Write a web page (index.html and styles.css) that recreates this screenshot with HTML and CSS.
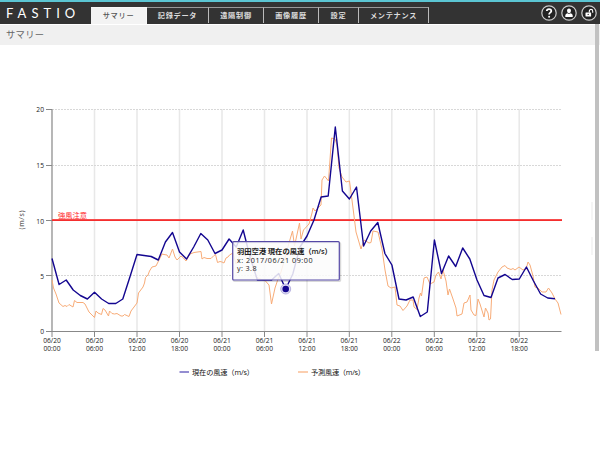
FILE: index.html
```
<!DOCTYPE html>
<html lang="ja">
<head>
<meta charset="utf-8">
<title>FASTIO</title>
<link rel="stylesheet" href="styles.css">
</head>
<body>
<header class="topbar">
  <div class="brand">FASTIO</div>
  <nav class="tabs">
    <a class="tab active">サマリー</a>
    <a class="tab data">記録データ</a>
    <a class="tab remote">遠隔制御</a>
    <a class="tab images">画像履歴</a>
    <a class="tab settings">設定</a>
    <a class="tab maint">メンテナンス</a>
  </nav>
  <div class="actions">
    <svg class="action" viewBox="0 0 16 16"><circle class="ring" cx="8" cy="8" r="7.2"/><path class="question" d="M5.8 6.1C5.8 3.4 10.3 3.4 10.3 6C10.3 7.7 8.1 7.6 8.1 9.4"/><circle class="solid" cx="8.1" cy="11.7" r="1"/></svg>
    <svg class="action" viewBox="0 0 16 16"><circle class="ring" cx="8" cy="8" r="7.2"/><ellipse class="solid" cx="8" cy="5.8" rx="2" ry="2.4"/><path class="solid" d="M4.3 12V10.2Q4.5 8.7 6.5 8.3L8 9L9.5 8.3Q11.5 8.7 11.7 10.2V12Z"/></svg>
    <svg class="action" viewBox="0 0 16 16"><circle class="ring" cx="8" cy="8" r="7.2"/><rect class="solid" x="4.5" y="7.4" width="5.6" height="4.2" rx=".5"/><path class="shackle" d="M8.3 7.6V6.2C8.3 3.7 11.7 3.7 11.7 6.2V7.7"/><circle class="hole" cx="7.2" cy="9.4" r=".7"/></svg>
  </div>
</header>
<h1 class="title">サマリー</h1>
<main class="content">
<svg class="chart" viewBox="0 45 600 405" width="600" height="405">
  <path class="grid-v" d="M94.5 109V331M137 109V331M179.5 109V331M222 109V331M264.5 109V331M307 109V331M349.3 109V331M391.8 109V331M434.3 109V331M476.8 109V331M519.2 109V331"/>
  <path class="grid-h" d="M52 109.5H562M52 165.5H562M52 275.5H562"/>
  <path class="axis-y" d="M52 109V332"/>
  <path class="axis" d="M46 109.5H52M46 165.5H52M46 220.5H52M46 275.5H52M46 331.5H561.5M52 331V337M94.5 331V337M137 331V337M179.5 331V337M222 331V337M264.5 331V337M307 331V337M349.3 331V337M391.8 331V337M434.3 331V337M476.8 331V337M519.2 331V337"/>
  <path class="limit-halo" d="M52 220H562"/><path class="limit" d="M52 220.2H562"/>
  <text class="limit-label" x="58" y="218" textLength="29">強風注意</text>
  <polyline class="forecast" points="52,280 53.5,288 56,294 59,303 63,306.5 65,305.5 67,306.5 69,304.5 73,307 74.5,300.5 77,302.5 83,302.5 85,304 89,312 94.5,317.5 96,311 98,313 101.5,314.5 103,308.5 105,310 108.5,316 109.5,311 112,313.5 114.5,314 117,313.5 121,316 123,316 124.5,314.5 129,316.5 131,311 137,303 138.5,293 143,287 144.5,283 145.5,277.5 148,275 149.5,271 152,267 156,266 158,262 160,258 162,254 164,254.5 167,255 169,258 172.5,249 175,257 177,260 181,256 183.5,258 186,261 190,254 194,252.5 201,251.5 202,259 204,257.5 207,258.5 211,258.5 214,255.5 215.5,254.5 217.5,262.5 220,261.5 222,262 224,263 226,258 228,257 229.5,255 233,253 236,264 240,255 245,250 249,254 253,258 256,277 260,279 265,280.5 269,285 271.5,304 275,288 278,279 281,272 285,258 289,243 292.5,231 294.5,246 299.5,223 301,239 303.5,230 309,224 312,213 313,208 315,211 321,205 322,180 324.5,176 328.5,181 331.5,138 335,139 337,145 339,168 342,177 346,182 349.5,181 353,208 356,232 361,249 364,240 369,243 371,242.5 373,231 378,232 382,249 385,270 388,286 391,288 395,287 397,305 400,306 403,310.5 407,306 410,300 413,300 414,307 417,309.5 419,298 420.5,293 421.5,296 424,278 427,277 430,284 434,282 436,275 438.5,272 441,279 443,270 446,281 448,295 449.5,289 453,299 456,308 457,316 462,314 464,303 467,302 470,295 471,310 474,315 476,315.5 478,299 480,304 484,317 485.5,308 488,313 489,320 490.5,319 492,290 494,280 498,272 502,267 505,265.5 507,268 511,269.5 513,268.5 515,270 519,267 523,270 525,269 526,269.5 528,262 530,265 533,276 535,287 538,288 542,292 546,292 548.5,288 552,293 555,299 558,303 561,314.5"/>
  <polyline class="current" points="52,258.5 59.1,284.5 66.2,280 73.2,290 80.3,295.5 87.4,299 94.5,292.3 101.6,299 108.7,303.5 115.8,303.5 122.8,299 129.9,277 137,254.5 144.1,255.5 151.2,256.5 158.3,260 165.4,242 172.5,232.5 179.5,252 186.6,259 193.7,247 200.8,233.5 207.8,240 215,253.5 222,250 229.1,239 236.2,247 243.2,230 250.3,258 257.4,280 264.5,280 271.6,280 278.7,273.5 285.7,289 292.8,274 300,247 307,236 314,220 321.1,197 328.2,196 335.3,127 342.4,191 349.4,199 356.5,187 363.6,246 370.7,231 377.8,222.5 384.9,253.5 391.9,265 399,299 406.1,300 413.2,297 420.3,316.5 427.3,312 434.4,240 441.5,273.5 448.6,256 455.7,266.5 462.7,248 469.8,259 477,280 484,295.5 491,297.5 498,278 505.1,274.5 512.2,279.5 519.3,279 526.4,267 533.5,281 540.6,294 547.7,298 555,298.8"/>
  <g class="ylabels"><text x="44" y="112.3">20</text><text x="44" y="168">15</text><text x="44" y="223.5">10</text><text x="44" y="278.5">5</text><text x="44" y="334.3">0</text></g>
  <text class="unit" transform="translate(23.5 220) rotate(-90)" textLength="19">(m/s)</text>
  <g class="xlabels">
    <text x="52" y="342.7">06/20</text><text x="52" y="351">00:00</text>
    <text x="94.5" y="342.7">06/20</text><text x="94.5" y="351">06:00</text>
    <text x="137" y="342.7">06/20</text><text x="137" y="351">12:00</text>
    <text x="179.5" y="342.7">06/20</text><text x="179.5" y="351">18:00</text>
    <text x="222" y="342.7">06/21</text><text x="222" y="351">00:00</text>
    <text x="264.5" y="342.7">06/21</text><text x="264.5" y="351">06:00</text>
    <text x="307" y="342.7">06/21</text><text x="307" y="351">12:00</text>
    <text x="349.3" y="342.7">06/21</text><text x="349.3" y="351">18:00</text>
    <text x="391.8" y="342.7">06/22</text><text x="391.8" y="351">00:00</text>
    <text x="434.3" y="342.7">06/22</text><text x="434.3" y="351">06:00</text>
    <text x="476.8" y="342.7">06/22</text><text x="476.8" y="351">12:00</text>
    <text x="519.2" y="342.7">06/22</text><text x="519.2" y="351">18:00</text>
  </g>
  <path class="key-current" d="M179.5 372H189"/><text class="legend" x="192" y="374.5" textLength="62">現在の風速（m/s）</text>
  <path class="key-forecast" d="M298 372H308"/><text class="legend" x="311" y="374.5" textLength="54">予測風速（m/s）</text>
  <rect class="tip-shadow" x="233.5" y="242.7" width="107" height="38.5" rx="1"/>
  <rect class="tip" x="232.7" y="241.7" width="106.6" height="38.3" rx="1"/>
  <circle class="marker-halo" cx="285.7" cy="289" r="5"/><circle class="marker" cx="285.7" cy="289" r="3.3"/>
  <text class="tip-title" x="237" y="253.6" textLength="95">羽田空港 現在の風速（m/s）</text>
  <text class="tip-text" x="237" y="262.5" textLength="75.5">x: 2017/06/21 09:00</text>
  <text class="tip-text" x="237" y="271.3" textLength="19.5">y: 3.8</text>
  <path class="edge" d="M592 202V220M592 237V255"/>
</svg>
</main>
<div class="scrollbar"></div>
</body>
</html>
```
FILE: styles.css
```
* { box-sizing: border-box; }
body {
  margin: 0;
  width: 600px;
  height: 450px;
  overflow: hidden;
  background: #fff;
  font-family: "Open Sans", "Noto Sans CJK JP", sans-serif;
}
.topbar {
  display: flex;
  height: 24px;
  background: #333;
  border-top: 2px solid #5bc5d3;
}
.brand {
  width: 91px;
  padding-left: 6px;
  color: #fff;
  font: 13px/23px Lato, sans-serif;
  letter-spacing: 5px;
  white-space: nowrap;
}
.tabs { display: flex; height: 16px; margin-top: 5px; }
.tab {
  border-top: 1px solid #999;
  border-right: 1px solid #bbb;
  color: #ddd;
  font-size: 7.2px;
  font-weight: 700;
  line-height: 15px;
  letter-spacing: .7px;
  text-align: center;
  white-space: nowrap;
}
.active {
  width: 56px;
  height: 17px;
  background: #f3f3f3;
  border-color: #f8f8f8;
  color: #555;
  font-weight: 500;
}
.data { width: 62px; }
.remote { width: 55px; }
.images { width: 55px; }
.settings { width: 40px; }
.maint { width: 70px; }
.actions {
  display: flex;
  gap: 4.2px;
  margin: 3px 3px 0 auto;
}
.action { width: 16px; height: 16px; }
.ring { fill: #222; stroke: #ccc; stroke-width: 1.2; }
.solid { fill: #fff; }
.question { fill: none; stroke: #fff; stroke-width: 1.8; }
.shackle { fill: none; stroke: #fff; stroke-width: 1.1; }
.hole { fill: #333; }
.title {
  height: 21px;
  margin: 0;
  padding-left: 6px;
  border-top: 1px solid #fff;
  background: #f0f0f0;
  color: #666;
  font-size: 9.3px;
  font-weight: 400;
  line-height: 19px;
  letter-spacing: .3px;
}
.chart { display: block; }
.grid-v { stroke: #e8e8e8; stroke-width: 1.5; }
.grid-h { stroke: #d8d8d8; stroke-dasharray: 2 1; }
.axis-y { stroke: #aaa; stroke-width: 1.7; }
.axis { fill: none; stroke: #888; }
.limit-halo { stroke: #f88; stroke-width: 2; }
.limit { stroke: #f01010; stroke-width: 1.2; }
.limit-label { fill: #f22; font-size: 7.3px; }
.forecast { fill: none; stroke: #f8ac78; stroke-width: 1; stroke-linejoin: round; }
.current { fill: none; stroke: #130690; stroke-width: 1.4; stroke-linejoin: round; }
.marker { fill: #130690; }
.marker-halo { fill: #dcdaf2; stroke: #aaa3d8; stroke-width: .8; }
.ylabels { fill: #222; font-size: 6.7px; text-anchor: end; }
.unit { fill: #333; font-size: 7px; text-anchor: middle; }
.xlabels { fill: #222; font-size: 6.7px; text-anchor: middle; }
.key-current { stroke: #5a50b8; stroke-width: 1.3; }
.key-forecast { stroke: #f9b384; stroke-width: 1.3; }
.legend { fill: #111; font-size: 7.2px; }
.tip-shadow { fill: none; stroke: #000; stroke-opacity: .15; stroke-width: 1.5; }
.tip { fill: #fbfbfb; fill-opacity: .85; stroke: #5548a5; stroke-width: 1.2; }
.tip-title { fill: #222; font-size: 7.4px; font-weight: 600; }
.tip-text { fill: #222; font-size: 7.2px; }
.edge { stroke: #f5f5f5; stroke-width: 2; }
.scrollbar {
  position: absolute;
  top: 24px;
  right: 1px;
  width: 4px;
  height: 327px;
  background: #c1c1c1;
}
```
